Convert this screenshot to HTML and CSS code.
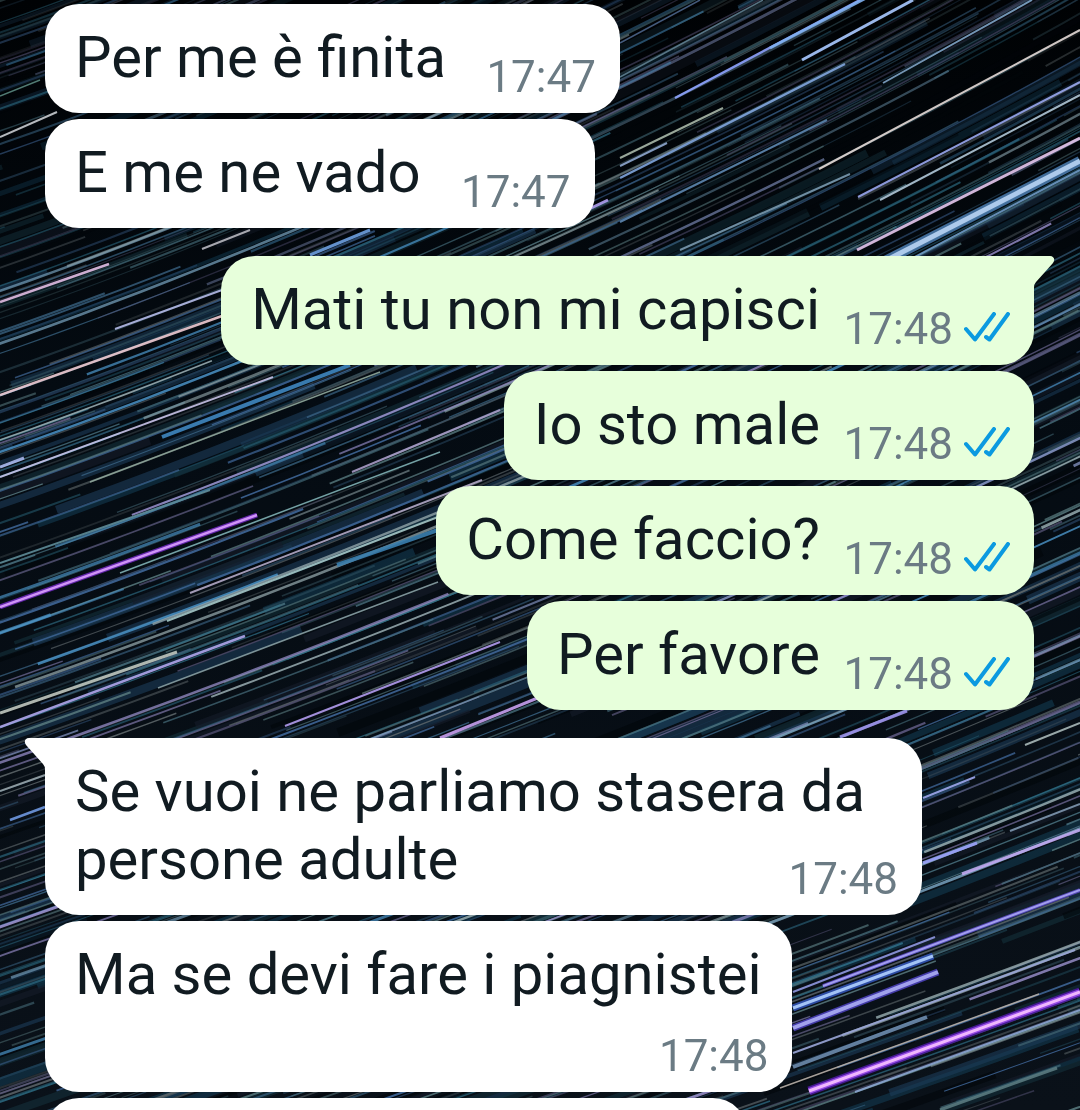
FILE: index.html
```html
<!DOCTYPE html>
<html lang="it">
<head>
    <meta charset="UTF-8">
    <meta name="viewport" content="width=device-width, initial-scale=1.0">
    <title>Chat</title>
    <link rel="stylesheet" href="styles.css">
</head>
<body>
    <svg id="wallpaper" class="wallpaper" viewBox="0 0 1080 1110" preserveAspectRatio="xMidYMid slice" aria-hidden="true"></svg>

    <svg class="symbols" aria-hidden="true">
        <symbol id="ticks" viewBox="0 0 46 30">
            <path d="M2 17L11 27.500L30 2M22 25L25.500 27.500L44 2" />
        </symbol>
        <symbol id="tail" viewBox="0 0 22 32">
            <path d="M0 0H17C21 0 22.500 4 20 7L3 26Q1 28 1 32H0Z" />
        </symbol>
    </svg>

    <main class="chat">
        <section class="group received">
            <div class="bubble">
                <p class="text">Per me è finita<span class="spacer"></span></p>
                <div class="meta"><time>17:47</time></div>
            </div>
            <div class="bubble">
                <p class="text">E me ne vado<span class="spacer"></span></p>
                <div class="meta"><time>17:47</time></div>
            </div>
        </section>

        <section class="group sent">
            <div class="bubble first">
                <svg class="tail"><use href="#tail" /></svg>
                <p class="text">Mati tu non mi capisci<span class="spacer"></span></p>
                <div class="meta"><time>17:48</time><svg class="ticks"><use href="#ticks" /></svg></div>
            </div>
            <div class="bubble">
                <p class="text">Io sto male<span class="spacer"></span></p>
                <div class="meta"><time>17:48</time><svg class="ticks"><use href="#ticks" /></svg></div>
            </div>
            <div class="bubble">
                <p class="text">Come faccio?<span class="spacer"></span></p>
                <div class="meta"><time>17:48</time><svg class="ticks"><use href="#ticks" /></svg></div>
            </div>
            <div class="bubble">
                <p class="text">Per favore<span class="spacer"></span></p>
                <div class="meta"><time>17:48</time><svg class="ticks"><use href="#ticks" /></svg></div>
            </div>
        </section>

        <section class="group received">
            <div class="bubble first">
                <svg class="tail"><use href="#tail" /></svg>
                <p class="text">Se vuoi ne parliamo stasera da persone adulte<span class="spacer"></span></p>
                <div class="meta"><time>17:48</time></div>
            </div>
            <div class="bubble stacked">
                <p class="text">Ma se devi fare i piagnistei</p>
                <div class="meta"><time>17:48</time></div>
            </div>
            <div class="bubble next"></div>
        </section>
    </main>

    <script src="wallpaper.js"></script>
</body>
</html>
```

FILE: styles.css
```css
* {
    box-sizing: border-box;
}
body {
    margin: 0;
    background: linear-gradient(#000204, #040b12 35%, #0a1119);
    font-family: Roboto, sans-serif;
    color: #111b21;
}
.wallpaper {
    position: fixed;
    inset: 0;
    z-index: -1;
    width: 100%;
    height: 100%;
}
.wallpaper path {
    fill: none;
}
.symbols {
    position: absolute;
    width: 0;
    height: 0;
}

/* message list */
.chat {
    display: flex;
    flex-direction: column;
    gap: 28px;
    height: 100vh;
    padding: 4px 46px 0 45px;
    overflow: hidden;
}
.group {
    display: flex;
    flex-direction: column;
    flex-shrink: 0;
    gap: 6px;
}
.received {
    align-items: flex-start;
    --bubble: #ffffff;
    --meta-space: 150px;
}
.sent {
    align-items: flex-end;
    --bubble: #e7ffdb;
    --meta-space: 190px;
}

/* text and time share one grid cell, the spacer keeps them apart */
.bubble {
    position: relative;
    display: grid;
    max-width: calc(100% - 112px);
    padding: 19px 24px 11px 30px;
    border-radius: 34px;
    background-color: var(--bubble);
}
.text {
    grid-area: 1 / 1;
    margin: 0;
    padding-bottom: 11px;
    font-size: 58px;
    line-height: 68px;
}
.spacer {
    display: inline-block;
    width: var(--meta-space);
}
.meta {
    grid-area: 1 / 1;
    display: flex;
    gap: 11px;
    place-self: end;
    color: #6b7b84;
    font-size: 44px;
    line-height: 50px;
}
.ticks {
    width: 46px;
    height: 30px;
    margin-top: 8px;
    fill: none;
    stroke: #0b9ae0;
    stroke-width: 4;
    stroke-linecap: round;
    stroke-linejoin: round;
}
.stacked {
    row-gap: 12px;
}
.stacked .text {
    padding-right: 7px;
}
.stacked .meta {
    grid-row: 2;
}
.next {
    width: 71%;
    height: 109px;
}

.tail {
    position: absolute;
    top: 0;
    width: 22px;
    height: 32px;
    fill: var(--bubble);
}
.sent .first {
    border-top-right-radius: 0;
}
.sent .tail {
    left: calc(100% - 1px);
}
.received .first {
    border-top-left-radius: 0;
}
.received .tail {
    right: calc(100% - 1px);
    transform: scaleX(-1);
}
```

FILE: wallpaper.js
```javascript
// star trails: a layer of random faint ones, then the bright ones
var svg = document.getElementById("wallpaper");
var seed = 41;

function random() {
    seed = (seed * 16807) % 2147483647;
    return seed / 2147483647;
}

// the trails get steeper towards the top right corner
function slope(x, y) {
    var right = Math.pow(Math.max(x, 0) / 1080, 0.7);
    var up = Math.max(0, 1 - y / 1110);
    return 0.35 + 0.22 * right * up;
}

function addTrail(d, color, width, opacity) {
    var path = document.createElementNS("http://www.w3.org/2000/svg", "path");
    path.setAttribute("d", d);
    path.setAttribute("stroke", color);
    path.setAttribute("stroke-width", width);
    path.setAttribute("opacity", opacity);
    svg.appendChild(path);
}

function faintTrail(colors, width, opacity) {
    var x = random() * 1400 - 320;
    var y = random() * 1600 - 50;
    var end = x + 100 + random() * 400;
    // darker sky at the top
    var fade = Math.min(1, 0.4 + y / 800);
    var d = "M" + x + " " + y;
    while (x < end) {
        y -= 30 * slope(x, y);
        x += 30;
        d += "L" + x + " " + y;
    }
    addTrail(d, colors[Math.floor(random() * colors.length)], width, opacity * Math.max(0.25, fade));
}

var hazeColors = ["#123a50", "#151c2a", "#14303a", "#1c3c58", "#02060a", "#02060a"];
var faintColors = ["#48707e", "#3a6484", "#5b6468", "#40689a", "#56777c", "#66628a", "#2f7088"];
var softColors = ["#7aa6c2", "#8f9fd0", "#98acb0", "#4b94c8", "#9c92d0"];

for (var i = 0; i < 420; i++) {
    faintTrail(hazeColors, 3 + random() * 6, 0.6);
}
for (var i = 0; i < 950; i++) {
    faintTrail(faintColors, 1.1 + random() * 1.1, 0.3 + random() * 0.6);
}
for (var i = 0; i < 130; i++) {
    faintTrail(softColors, 1.6 + random() * 1.4, 0.5 + random() * 0.4);
}

// x1, y1, x2, y2, color, width
var brightTrails = [
    [675, 98, 860, 0, "#8fa4ff", 2.5],
    [770, 48, 868, -3, "#7fb0ee", 3],
    [802, 60, 913, 0, "#a9c8ff", 3],
    [620, 178, 845, 64, "#7fa5dd", 2.5],
    [620, 222, 827, 120, "#5d86b0", 2],
    [883, 83, 1032, 0, "#7fa5c8", 2],
    [819, 169, 1080, 30, "#e6dcd8", 2],
    [858, 197, 1080, 82, "#9aa8f0", 2],
    [880, 200, 1080, 95, "#b0c8d8", 2],
    [857, 250, 1080, 138, "#e5c8ee", 3],
    [840, 284, 1080, 161, "#4878a8", 10],
    [840, 284, 1080, 161, "#b9d4f4", 5],
    [890, 270, 1080, 170, "#6f9cc8", 2],
    [680, 250, 850, 174, "#7a9ab0", 2],
    [620, 158, 723, 108, "#a9b8a8", 2],
    [620, 166, 667, 143, "#8fa8d0", 2],
    [620, 77, 763, 0, "#5f8090", 1.5],
    [620, 43, 700, 0, "#4a6488", 1.5],
    [570, 218, 608, 200, "#b0a0f0", 3],
    [0, 137, 57, 112, "#c8ccd0", 2],
    [0, 96, 40, 80, "#5a8880", 1.5],
    [0, 302, 109, 264, "#e2bfe6", 2.5],
    [0, 395, 222, 316, "#f0ccd4", 2.5],
    [115, 329, 222, 290, "#b5bbe8", 2],
    [0, 477, 273, 377, "#c9c3e8", 2],
    [162, 437, 350, 365, "#3f86c0", 4],
    [90, 482, 380, 372, "#90a89c", 1.5],
    [0, 467, 24, 458, "#a9b8ee", 3],
    [0, 563, 210, 490, "#5e8c98", 2],
    [0, 607, 257, 515, "#6a28b8", 5],
    [0, 607, 257, 515, "#dca0ff", 2.5],
    [190, 593, 482, 480, "#b3aac8", 2],
    [167, 621, 438, 517, "#a5c8c8", 2],
    [337, 565, 438, 530, "#3a7eae", 4],
    [120, 573, 440, 452, "#7fb0b4", 1.5],
    [352, 472, 500, 410, "#a89cc8", 2],
    [0, 713, 177, 652, "#c0c8c0", 3],
    [0, 727, 245, 636, "#b0a8ee", 2.5],
    [158, 688, 438, 582, "#88a0a4", 1.5],
    [285, 726, 500, 642, "#b29cee", 2],
    [440, 738, 540, 697, "#c8a0f0", 3],
    [202, 249, 250, 230, "#b8b8c0", 2],
    [310, 255, 370, 230, "#6ea0e0", 3],
    [10, 820, 45, 807, "#6f98e0", 2.5],
    [0, 791, 45, 775, "#98a4a8", 2],
    [840, 737, 907, 711, "#9a90e8", 3],
    [1025, 745, 1080, 723, "#a8b8b8", 2],
    [923, 798, 975, 777, "#a0aaf0", 2],
    [1010, 831, 1080, 804, "#7f98b0", 2],
    [962, 874, 1080, 830, "#c0a8f0", 3],
    [923, 863, 977, 843, "#9aa0f8", 3],
    [823, 986, 1080, 890, "#5a48c0", 4],
    [823, 986, 1080, 890, "#aaa6f4", 2],
    [793, 992, 935, 937, "#8f98e0", 2],
    [793, 1008, 933, 956, "#3050b0", 7],
    [793, 1008, 933, 956, "#b0d0ff", 3],
    [793, 1028, 938, 972, "#4a40b8", 7],
    [793, 1028, 938, 972, "#acaef4", 4],
    [793, 1053, 1075, 950, "#9aa6d8", 2],
    [793, 1067, 927, 1017, "#6d8cae", 4],
    [780, 1088, 1039, 994, "#b8b0a8", 1.5],
    [855, 1092, 1080, 1010, "#8ba5d0", 2],
    [940, 1110, 1057, 1068, "#5a7a80", 3],
    [809, 1091, 1080, 992, "#4a1a9c", 9],
    [809, 1091, 1080, 992, "#a050f0", 6],
    [809, 1091, 1080, 992, "#f8c4ff", 3]
];

brightTrails.forEach(function (t) {
    addTrail("M" + t[0] + " " + t[1] + "L" + t[2] + " " + t[3], t[4], t[5], 0.9);
});
```
